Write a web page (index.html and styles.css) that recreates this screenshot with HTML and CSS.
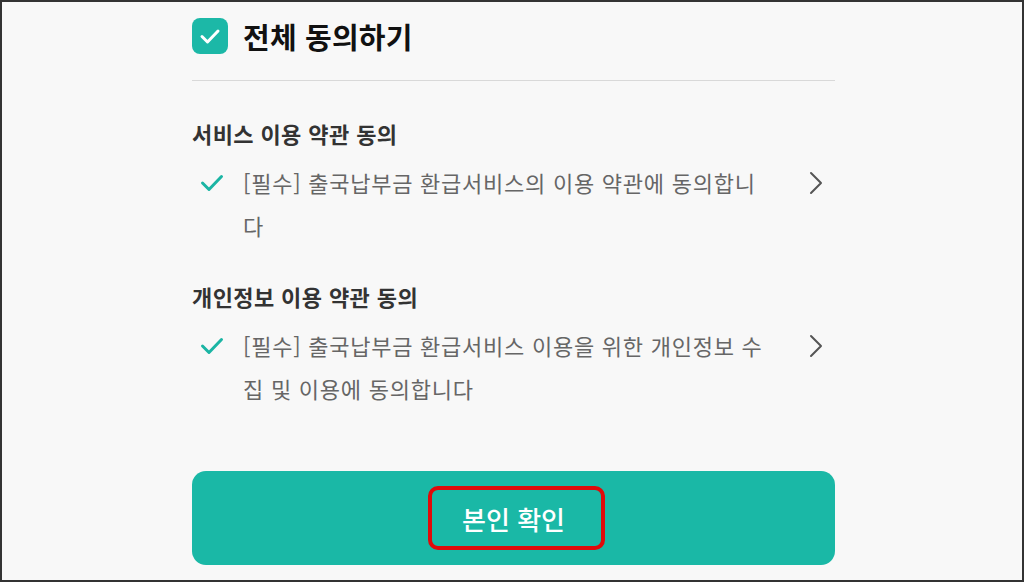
FILE: index.html
```html
<!DOCTYPE html>
<html lang="ko">
<head>
<meta charset="utf-8">
<link rel="stylesheet" href="styles.css">
</head>
<body>
<div class="frame">
  <div class="column">
    <div class="all-agree">
      <span class="box">
        <svg width="36" height="36" viewBox="0 0 36 36"><path d="M10 18.5 L15.5 24 L26 13" fill="none" stroke="#fff" stroke-width="3" stroke-linecap="round" stroke-linejoin="round"/></svg>
      </span>
      <span class="all-title">전체 동의하기</span>
    </div>
    <div class="divider"></div>

    <div class="section-title first">서비스 이용 약관 동의</div>
    <div class="term">
      <span class="tick"><svg width="24" height="20" viewBox="0 0 24 20"><path d="M2.5 10 L9 16.5 L21.5 3.5" fill="none" stroke="#1bb5a4" stroke-width="3" stroke-linecap="round" stroke-linejoin="round"/></svg></span>
      <span class="term-text">[필수] 출국납부금 환급서비스의 이용 약관에 동의합니다</span>
      <span class="chev"><svg width="16" height="24" viewBox="0 0 16 24"><path d="M3 2 L13 12 L3 22" fill="none" stroke="#555" stroke-width="2" stroke-linecap="round" stroke-linejoin="round"/></svg></span>
    </div>

    <div class="section-title">개인정보 이용 약관 동의</div>
    <div class="term">
      <span class="tick"><svg width="24" height="20" viewBox="0 0 24 20"><path d="M2.5 10 L9 16.5 L21.5 3.5" fill="none" stroke="#1bb5a4" stroke-width="3" stroke-linecap="round" stroke-linejoin="round"/></svg></span>
      <span class="term-text">[필수] 출국납부금 환급서비스 이용을 위한 개인정보 수집 및 이용에 동의합니다</span>
      <span class="chev"><svg width="16" height="24" viewBox="0 0 16 24"><path d="M3 2 L13 12 L3 22" fill="none" stroke="#555" stroke-width="2" stroke-linecap="round" stroke-linejoin="round"/></svg></span>
    </div>

    <div class="confirm">
      <span class="confirm-label">본인 확인</span>
      <span class="highlight"></span>
    </div>
  </div>
</div>
</body>
</html>
```

FILE: styles.css
```css
* { box-sizing: border-box; }
html, body { margin: 0; padding: 0; }
body {
  width: 1024px;
  height: 582px;
  overflow: hidden;
  font-family: "Noto Sans CJK KR", "Noto Sans", sans-serif;
  background: #f8f8f8;
}
.frame {
  width: 1024px;
  height: 582px;
  border: 2px solid #333;
  background: #f8f8f8;
  padding-top: 16px;
}
.column {
  width: 643px;
  margin-left: 190px;
}
.all-agree {
  display: flex;
  align-items: center;
  gap: 15px;
  height: 36px;
}
.box {
  width: 36px;
  height: 36px;
  border-radius: 8px;
  background: #1cb8a7;
  display: flex;
}
.all-title {
  font-size: 29px;
  font-weight: 700;
  color: #111;
  letter-spacing: 0.2px;
  line-height: 36px;
}
.divider {
  margin-top: 26px;
  height: 1px;
  background: #d9d9d9;
}
.section-title {
  font-size: 22px;
  font-weight: 700;
  color: #333;
  line-height: 30px;
  letter-spacing: 0.4px;
  margin-top: 34px;
}
.section-title.first { margin-top: 37px; }
.term {
  display: flex;
  align-items: flex-start;
  margin-top: 13px;
}
.tick {
  width: 51px;
  height: 43px;
  display: flex;
  align-items: center;
  padding-left: 8px;
  flex-shrink: 0;
}
.term-text {
  width: 531px;
  font-size: 22px;
  line-height: 43px;
  color: #666;
  letter-spacing: 0.75px;
  flex-shrink: 0;
}
.chev {
  height: 43px;
  display: flex;
  align-items: center;
  margin-left: 34px;
}
.confirm {
  position: relative;
  margin-top: 61px;
  height: 94px;
  border-radius: 14px;
  background: #1ab8a6;
  display: flex;
  align-items: center;
  justify-content: center;
}
.confirm-label {
  color: #fff;
  font-size: 26px;
  font-weight: 500;
}
.highlight {
  position: absolute;
  left: 236px;
  top: 15px;
  width: 177px;
  height: 64px;
  border: 4px solid #e00a0a;
  border-radius: 10px;
}
```
